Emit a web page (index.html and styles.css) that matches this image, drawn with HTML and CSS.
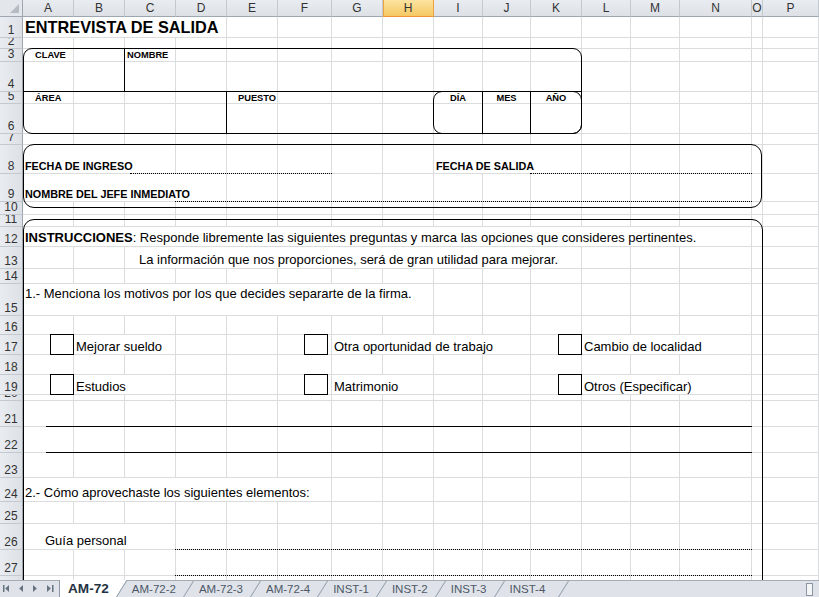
FILE: index.html
```html
<!DOCTYPE html>
<html lang="es">
<head>
  <meta charset="UTF-8">
  <title>Entrevista de salida</title>
  <link rel="stylesheet" href="styles.css">
</head>
<body>
  <div class="excel">
    <div class="sheet" id="sheet">
      <!-- headers and empty cells are added by sheet.js -->

      <!-- Fila 1 -->
      <div class="txt title">ENTREVISTA DE SALIDA</div>

      <!-- Datos del empleado -->
      <div class="field f-clave"><span class="tag">CLAVE</span></div>
      <div class="field f-nombre"><span class="tag">NOMBRE</span></div>
      <div class="field f-area"><span class="tag">ÁREA</span></div>
      <div class="field f-puesto"><span class="tag">PUESTO</span></div>
      <div class="f-fecha">
        <div class="dcell"><span class="tag">DÍA</span></div>
        <div class="dcell"><span class="tag">MES</span></div>
        <div class="dcell"><span class="tag">AÑO</span></div>
      </div>
      <div class="box box1"></div>

      <!-- Fechas -->
      <div class="txt lbl l-ingreso">FECHA DE INGRESO</div>
      <div class="txt lbl l-salida">FECHA DE SALIDA</div>
      <div class="txt lbl l-jefe">NOMBRE DEL JEFE INMEDIATO</div>
      <div class="dots d-ingreso"></div>
      <div class="dots d-salida"></div>
      <div class="dots d-jefe"></div>
      <div class="box box2"></div>

      <!-- Instrucciones -->
      <div class="txt instr"><b>INSTRUCCIONES</b>: Responde libremente las siguientes preguntas y marca las opciones que consideres pertinentes.</div>
      <div class="txt instr2">La información que nos proporciones, será de gran utilidad para mejorar.</div>
      <div class="txt q1">1.- Menciona los motivos por los que decides separarte de la firma.</div>

      <div class="chk ca r17"></div>
      <div class="txt opt oa r17">Mejorar sueldo</div>
      <div class="chk cf r17"></div>
      <div class="txt opt og r17">Otra oportunidad de trabajo</div>
      <div class="chk ck r17"></div>
      <div class="txt opt ol r17">Cambio de localidad</div>

      <div class="chk ca r19"></div>
      <div class="txt opt oa r19">Estudios</div>
      <div class="chk cf r19"></div>
      <div class="txt opt og2 r19">Matrimonio</div>
      <div class="chk ck r19"></div>
      <div class="txt opt ol r19">Otros (Especificar)</div>

      <div class="rule r21"></div>
      <div class="rule r22"></div>

      <div class="txt q2">2.- Cómo aprovechaste los siguientes elementos:</div>
      <div class="txt guia">Guía personal</div>
      <div class="dots r26"></div>
      <div class="dots r27"></div>
      <div class="box box3"></div>
    </div>

    <div class="tabbar">
      <div class="tab-nav">
        <svg width="58" height="16" viewBox="0 0 58 16">
          <g fill="#66727f">
            <rect x="3" y="4" width="1.5" height="7"/>
            <polygon points="9,4 9,11 5.2,7.5"/>
            <polygon points="23,4 23,11 19.2,7.5"/>
            <polygon points="33,4 33,11 36.8,7.5"/>
            <polygon points="47,4 47,11 50.8,7.5"/>
            <rect x="52" y="4" width="1.5" height="7"/>
          </g>
        </svg>
      </div>
      <div class="tabs">
        <span class="tab active">AM-72</span>
        <span class="tab">AM-72-2</span>
        <span class="tab">AM-72-3</span>
        <span class="tab">AM-72-4</span>
        <span class="tab">INST-1</span>
        <span class="tab">INST-2</span>
        <span class="tab">INST-3</span>
        <span class="tab">INST-4</span>
      </div>
      <div class="hsplit"></div>
    </div>
  </div>
  <script src="sheet.js"></script>
</body>
</html>
```

FILE: styles.css
```css
* {
  margin: 0;
  padding: 0;
  box-sizing: border-box;
}

body {
  width: 819px;
  height: 597px;
  overflow: hidden;
  background: #fff;
  color: #000;
  font-family: 'Liberation Sans', Arial, sans-serif;
}

.excel {
  display: flex;
  flex-direction: column;
  height: 597px;
}

/* grid: row header + columns A..P, header row + rows 1..28 */
.sheet {
  flex: none;
  height: 580px;
  overflow: hidden;
  display: grid;
  grid-template-columns: 23px 51px 51px 51px 51px 51px 54px 51px 51px 49px 48px 51px 49px 49px 72px 11px 56px;
  grid-template-rows: 17px 21px 11px 13px 30px 12px 30px 11px 29px 28px 13px 12px 20px 22px 15px 32px 19px 20px 20px 20px 6px 26px 26px 25px 24px 22px 26px 26px 26px;
}

.cell {
  border-right: 1px solid #dadcdd;
  border-bottom: 1px solid #dadcdd;
}

.corner {
  position: relative;
  background: #e3e6ea;
  border-right: 1px solid #9ea6b0;
  border-bottom: 1px solid #9ea6b0;
}

.corner::after {
  content: '';
  position: absolute;
  right: 3px;
  bottom: 3px;
  border-left: 9px solid transparent;
  border-bottom: 9px solid #b5bbc3;
}

.col-head {
  background: linear-gradient(#e9ecf0, #dde1e6);
  border-right: 1px solid #c4c9cf;
  border-bottom: 1px solid #9ea6b0;
  text-align: center;
  font-size: 12px;
  line-height: 17px;
  color: #333;
}

.col-head.active {
  background: linear-gradient(#fce4a2, #f5c862);
  border-right-color: #eda23e;
  border-bottom-color: #f29436;
  box-shadow: inset 1px 0 #eda23e;
}

.row-head {
  display: flex;
  align-items: flex-end;
  justify-content: center;
  overflow: hidden;
  background: linear-gradient(90deg, #e9ecf0, #dde1e6);
  border-right: 1px solid #9ea6b0;
  border-bottom: 1px solid #c4c9cf;
  font-size: 12px;
  line-height: 14px;
  color: #333;
}

/* cell text (overflowing text hides gridlines like Excel) */
.txt {
  display: flex;
  align-items: flex-end;
  margin: 0 1px 1px 0;
  padding: 0 0 1px 2px;
  background: #fff;
  font-size: 13px;
  line-height: 15px;
  white-space: nowrap;
}

.title {
  grid-column: 2 / 6;
  grid-row: 2;
  padding: 0 0 0 2px;
  font-size: 16.3px;
  font-weight: bold;
  line-height: 19px;
}

/* employee data block */
.tag {
  display: block;
  font-size: 9.3px;
  font-weight: bold;
  line-height: 13px;
}

.f-clave {
  grid-column: 2 / 4;
  grid-row: 4 / 6;
  padding-left: 12px;
  border-right: 1px solid #000;
  border-bottom: 1px solid #000;
}

.f-nombre {
  grid-column: 4 / 13;
  grid-row: 4 / 6;
  padding-left: 2px;
  border-bottom: 1px solid #000;
}

.f-area {
  grid-column: 2 / 6;
  grid-row: 6 / 8;
  padding-left: 12px;
  border-right: 1px solid #000;
}

.f-puesto {
  grid-column: 6 / 10;
  grid-row: 6 / 8;
  padding-left: 11px;
}

.f-area .tag,
.f-puesto .tag,
.dcell .tag {
  line-height: 12px;
}

.f-fecha {
  grid-column: 10 / 13;
  grid-row: 6 / 8;
  margin: -1px 0 0 -1px;
  display: grid;
  grid-template-columns: 49px 48px 1fr;
  border: 1px solid #000;
  border-radius: 9px;
}

.dcell {
  text-align: center;
  border-right: 1px solid #000;
}

.dcell:last-child {
  border-right: none;
}

.box {
  border: 1px solid #000;
  pointer-events: none;
}

.box1 {
  grid-column: 2 / 13;
  grid-row: 4 / 8;
  margin-top: -1px;
  border-radius: 9px;
}

.box2 {
  grid-column: 2 / 17;
  grid-row: 9 / 12;
  margin: -1px 1px 7px 0;
  border-radius: 11px;
}

.box3 {
  grid-column: 2 / 17;
  grid-row: 12 / 30;
  margin-top: 4px;
  border-radius: 11px;
}

/* dates */
.lbl {
  padding-bottom: 0;
  font-size: 10.8px;
  font-weight: bold;
  line-height: 14px;
}

.l-ingreso { grid-column: 2 / 5; grid-row: 9; }
.l-salida  { grid-column: 10 / 13; grid-row: 9; }
.l-jefe    { grid-column: 2 / 6; grid-row: 10; }

.dots {
  grid-column: 5 / 16;
  margin-left: -1px;
  border-bottom: 1px dotted #000;
}

.d-ingreso { grid-column: 4 / 8; grid-row: 9; margin-left: 5px; }
.d-salida  { grid-column: 12 / 16; grid-row: 9; }
.d-jefe    { grid-row: 10; }

/* instructions */
.instr  { grid-column: 2 / 16; grid-row: 13; }
.instr2 { grid-column: 4 / 13; grid-row: 14; padding-left: 14px; }

.q1 {
  grid-column: 2 / 10;
  grid-row: 16;
  align-items: flex-start;
  padding-top: 2px;
}

.chk {
  margin-top: -1px;
  background: #fff;
  border: 1px solid #000;
}

.ca { grid-column: 2; margin-left: 27px; }
.cf { grid-column: 7; margin-left: 26px; margin-right: 4px; }
.ck { grid-column: 12; margin-left: 27px; }

.opt { padding-bottom: 0; }
.oa  { grid-column: 3 / 5; }
.og  { grid-column: 8 / 12; }
.og2 { grid-column: 8 / 10; }
.ol  { grid-column: 13 / 16; }

.r17 { grid-row: 18; }
.r19 { grid-row: 20; }

.rule {
  grid-column: 2 / 16;
  margin-left: 23px;
  border-bottom: 1px solid #000;
}

.r21 { grid-row: 22; }
.r22 { grid-row: 23; }

.q2   { grid-column: 2 / 8; grid-row: 25; }
.guia { grid-column: 2 / 5; grid-row: 27; padding-left: 22px; }

.r26 { grid-row: 27; }
.r27 { grid-row: 28; }

/* sheet tabs */
.tabbar {
  flex: none;
  height: 17px;
  display: flex;
  background: #dfe3e9;
  border-top: 1px solid #a3acb7;
  font-size: 11.5px;
}

.tab-nav {
  flex: none;
  width: 59px;
}

.tab-nav svg {
  display: block;
}

.tabs {
  display: flex;
}

.tab {
  position: relative;
  padding: 0 7px 0 16px;
  line-height: 16px;
  color: #4d5867;
}

.tab::before,
.tabs::after {
  content: '';
  position: absolute;
  left: 0;
  top: 0;
  bottom: 0;
  border-left: 1px solid #8d99a7;
  transform: skewX(-32deg);
  transform-origin: bottom left;
}

.tabs::after {
  position: relative;
  left: 6px;
}

.tab.active {
  margin-top: -1px;
  padding-left: 8px;
  background: #fff;
  border-left: 1px solid #8d99a7;
  font-size: 13.6px;
  font-weight: bold;
  line-height: 17px;
  color: #253243;
}

.tab.active::before {
  display: none;
}

.tab.active::after {
  content: '';
  position: absolute;
  left: 100%;
  top: 0;
  bottom: 0;
  width: 10px;
  background: linear-gradient(to bottom right, #fff 50%, transparent 50%);
}

.hsplit {
  margin: 2px 6px 0 auto;
  width: 7px;
  height: 13px;
  background: #f4f5f6;
  border: 1px solid #8a96a4;
}
```

FILE: sheet.js
```js
// builds the row/column headers and the empty cells behind the form
(function () {
  var sheet = document.getElementById('sheet');
  var first = sheet.firstChild;
  var cols = 'ABCDEFGHIJKLMNOP'.split('');
  var rows = 28;
  var activeCol = 'H';

  function add(cls, row, col, text) {
    var el = document.createElement('div');
    el.className = cls;
    el.style.gridRow = row;
    el.style.gridColumn = col;
    if (text) el.textContent = text;
    sheet.insertBefore(el, first);
  }

  add('corner', 1, 1);
  cols.forEach(function (c, i) {
    add('col-head' + (c === activeCol ? ' active' : ''), 1, i + 2, c);
  });

  for (var r = 1; r <= rows; r++) {
    add('row-head', r + 1, 1, r);
    for (var c = 0; c < cols.length; c++) {
      add('cell', r + 1, c + 2);
    }
  }
})();
```
